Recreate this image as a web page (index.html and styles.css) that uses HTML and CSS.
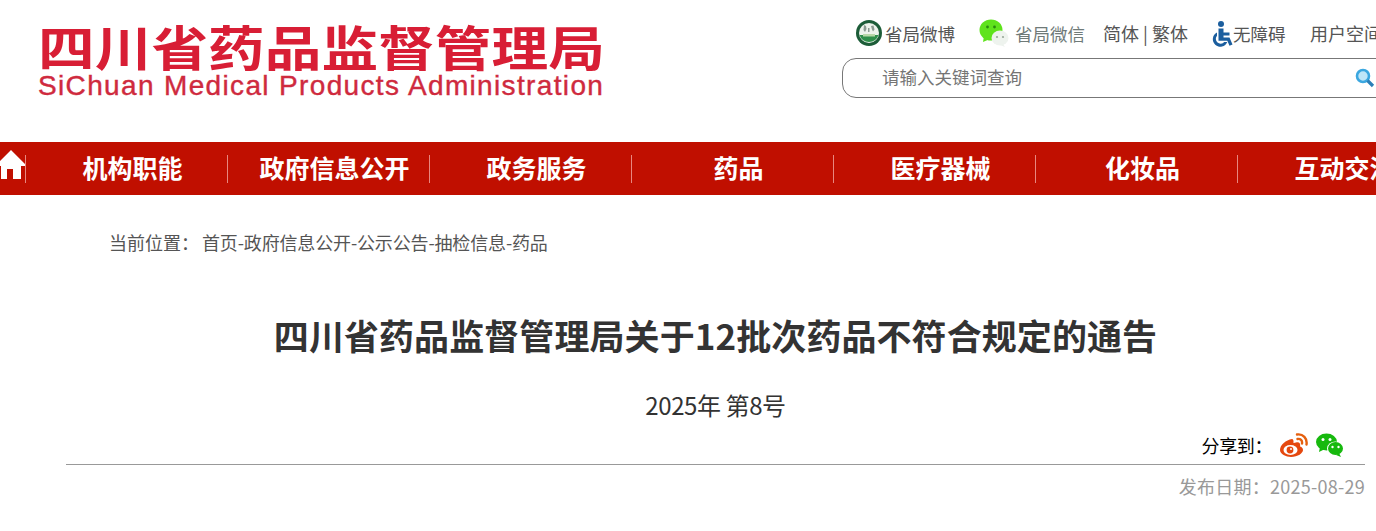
FILE: index.html
```html
<!DOCTYPE html>
<html lang="zh-CN">

<head>
    <meta charset="UTF-8">
    <title>四川省药品监督管理局关于12批次药品不符合规定的通告</title>
    <link rel="stylesheet" href="styles.css">
</head>

<body>

    <header class="header">
        <div class="logo">
            <div class="logo-cn">四川省药品监督管理局</div>
            <div class="logo-en">SiChuan Medical Products Administration</div>
        </div>

        <div class="tools">
            <div class="links">
                <a class="link link-weibo">
                    <svg class="icon-seal" viewBox="0 0 26 26">
                        <circle cx="13" cy="13" r="13" fill="#1c5c38" />
                        <circle cx="13" cy="13" r="10" fill="#eef3ec" />
                        <path d="M3.500 15h19a10 10 0 0 1-19 0z" fill="#2f8f4a" />
                        <path d="M7 14h12v2.500H7z" fill="#b9d8a8" />
                        <path d="M8 5l2 1 .5 3-1.500 3-1.500-2zM15 6l2.500-.5 1 4-1.500 2-1-2zM12 8h1.500v4H12z" fill="#8a9a90" />
                    </svg>
                    省局微博
                </a>
                <a class="link link-wechat">
                    <svg class="icon-chat" viewBox="0 0 30 28">
                        <ellipse cx="12" cy="11" rx="11.500" ry="10.500" fill="#5fe31c" />
                        <path d="M5 17l-1 6 7-3z" fill="#5fe31c" />
                        <circle cx="8.500" cy="8" r="1.400" fill="#2a8a10" />
                        <circle cx="15.500" cy="8" r="1.400" fill="#2a8a10" />
                        <ellipse cx="21" cy="19" rx="8.500" ry="7.500" fill="#eef3ee" />
                        <path d="M24 25l2 3-5-2z" fill="#eef3ee" />
                        <circle cx="18" cy="18" r="1.100" fill="#9aa89a" />
                        <circle cx="24" cy="18" r="1.100" fill="#9aa89a" />
                    </svg>
                    省局微信
                </a>
                <a class="link link-lang">简体 | 繁体</a>
                <a class="link link-access">
                    <svg class="icon-access" viewBox="0 0 20 26">
                        <circle cx="8.500" cy="3" r="3" fill="#1b5e9e" />
                        <path d="M6 7.500h5v4h6v3h-6v2h6l3 7-3 1.200-2.200-5H6z" fill="#1b5e9e" />
                        <path d="M4.500 11.500v3.300a4.500 4.500 0 1 0 7.200 6.200h3.100A7.500 7.500 0 1 1 4.500 11.500z" fill="#1b5e9e" />
                    </svg>
                    无障碍
                </a>
                <a class="link link-user">用户空间</a>
            </div>

            <div class="search">
                <span class="search-text">请输入关键词查询</span>
                <svg class="icon-search" viewBox="0 0 20 20">
                    <circle cx="8" cy="8" r="6" fill="#bfe6f8" stroke="#3ba7e0" stroke-width="2.600" />
                    <path d="M12.500 12.500l5.500 5.500" stroke="#2b7fb8" stroke-width="3.200" />
                </svg>
            </div>
        </div>
    </header>

    <nav class="nav">
        <a class="nav-home">
            <svg class="icon-home" viewBox="0 0 28 30">
                <path d="M14 1L28 15v2h-4v13h-8V20h-6v10H4V17H0v-2z" fill="#fff" />
            </svg>
        </a>
        <a class="nav-item">机构职能</a>
        <a class="nav-item">政府信息公开</a>
        <a class="nav-item">政务服务</a>
        <a class="nav-item">药品</a>
        <a class="nav-item">医疗器械</a>
        <a class="nav-item">化妆品</a>
        <a class="nav-item">互动交流</a>
    </nav>

    <main class="article">
        <div class="crumb">
            <span class="crumb-label">当前位置：</span>
            <span class="crumb-path">首页-政府信息公开-公示公告-抽检信息-药品</span>
        </div>

        <h1 class="title">四川省药品监督管理局关于12批次药品不符合规定的通告</h1>
        <p class="subtitle">2025年 第8号</p>

        <div class="share">
            <span class="share-label">分享到：</span>
            <svg class="icon-share" viewBox="0 0 28 24">
                <path d="M12 6C6 7 0 12 0 17c0 4 6 7 11 7 7 0 12-4 12-7 0-2-2-3.500-3-3.500 1-3-1-5-4-4-1 .3-2 .7-2.500.5.300-3-.5-4-1.500-4z" fill="#e5480f" />
                <ellipse cx="10.500" cy="17" rx="7" ry="5" fill="#fff" />
                <circle cx="10" cy="17" r="3.400" fill="#e5480f" />
                <circle cx="11" cy="16" r="1" fill="#fff" />
                <path d="M17 1.500c6-1 10.500 4 9.500 10M17.500 6c3-.5 5 1.500 4.500 4.500" fill="none" stroke="#e5600f" stroke-width="2.400" stroke-linecap="round" />
            </svg>
            <svg class="icon-share" viewBox="0 0 28 24">
                <ellipse cx="10.500" cy="9" rx="10.500" ry="8.500" fill="#17b90e" />
                <path d="M4 14l-1 5 6-3z" fill="#17b90e" />
                <circle cx="7" cy="6.500" r="1.500" fill="#fff" />
                <circle cx="14" cy="6.500" r="1.500" fill="#fff" />
                <ellipse cx="19.500" cy="15.500" rx="8.500" ry="7" fill="#fff" />
                <ellipse cx="19.500" cy="15.500" rx="7.500" ry="6.500" fill="#17b90e" />
                <path d="M23 20l2 4-5-2z" fill="#17b90e" />
                <circle cx="16.500" cy="14" r="1.200" fill="#fff" />
                <circle cx="22.500" cy="14" r="1.200" fill="#fff" />
            </svg>
        </div>

        <div class="date">发布日期：2025-08-29</div>
    </main>

</body>

</html>
```

FILE: styles.css
```css
* {
    margin: 0;
    padding: 0;
    box-sizing: border-box;
}

html,
body {
    overflow: hidden;
}

body {
    width: 1376px;
    height: 531px;
    background-color: #fff;
    color: #333;
    font-family: "Noto Sans CJK SC", "Liberation Sans", sans-serif;
}

.header {
    display: flex;
    height: 142px;
    width: 1500px;
}

.logo {
    width: 842px;
    padding: 21px 0 0 38px;
    color: #d81e35;
}

.logo-cn {
    font-size: 48px;
    font-weight: 700;
    line-height: 48px;
    white-space: nowrap;
    transform: scaleX(1.181);
    transform-origin: left center;
}

.logo-en {
    margin-top: 4px;
    font-family: "Liberation Sans", sans-serif;
    font-size: 28px;
    line-height: 26px;
    letter-spacing: 1.350px;
    white-space: nowrap;
    color: #cf2a3e;
    -webkit-text-stroke: 0.4px #cf2a3e;
}

.tools {
    width: 640px;
}

.links {
    display: flex;
    align-items: center;
    height: 58px;
    padding: 8px 0 0 14px;
    font-size: 17.500px;
    color: #555;
    white-space: nowrap;
}

.link {
    display: flex;
    align-items: center;
}

.link-weibo {
    width: 123px;
}

.link-wechat {
    width: 124px;
    color: #6f7a78;
}

.link-lang {
    width: 107px;
    font-size: 18px;
}

.link-access {
    width: 100px;
}

.icon-seal {
    width: 26px;
    height: 26px;
    margin-right: 3px;
}

.icon-chat {
    width: 30px;
    height: 28px;
    margin-right: 6px;
}

.icon-access {
    width: 21px;
    height: 26px;
    margin: 1px 0 0 2px;
}

.link-user {
    font-size: 18px;
}

.search {
    display: flex;
    align-items: center;
    justify-content: space-between;
    width: 620px;
    height: 40px;
    padding-left: 39px;
    padding-right: 86px;
    border: 1px solid #777;
    border-radius: 14px;
    font-size: 17.500px;
    color: #757575;
}

.search-text {
    margin-top: -3px;
}

.icon-search {
    width: 20px;
    height: 20px;
}

.nav {
    display: flex;
    height: 53px;
    align-items: center;
    background-color: #c00f00;
    white-space: nowrap;
}

.nav-home {
    flex: 0 0 26px;
    height: 28px;
    border-right: 1px solid #e8877f;
}

.icon-home {
    display: block;
    width: 28px;
    height: 30px;
    margin: -6px 0 0 -3px;
}

.nav-item {
    flex: 0 0 202px;
    height: 28px;
    padding-left: 12px;
    border-right: 1px solid #e8877f;
    font-size: 25px;
    font-weight: 700;
    line-height: 24px;
    text-align: center;
    color: #fff;
}

.article {
    width: 1299px;
    margin-left: 66px;
}

.crumb {
    display: flex;
    gap: 12px;
    padding: 34px 0 0 43px;
    font-size: 18px;
    line-height: 26px;
    color: #555;
}

.crumb-label {
    width: 81px;
    white-space: nowrap;
}

.crumb-path {
    letter-spacing: -0.150px;
}

.title {
    margin-top: 57px;
    font-size: 35px;
    line-height: 46px;
    letter-spacing: 0.080px;
    text-align: center;
    color: #333;
}

.subtitle {
    margin-top: 29px;
    font-size: 24px;
    line-height: 36px;
    letter-spacing: -0.400px;
    text-align: center;
}

.share {
    display: flex;
    align-items: center;
    justify-content: flex-end;
    gap: 8px;
    height: 42px;
    padding: 2px 21px 0 0;
    border-bottom: 1px solid #999;
    font-size: 18px;
    color: #000;
}

.share-label {
    letter-spacing: -0.400px;
}

.icon-share {
    width: 28px;
    height: 24px;
}

.date {
    margin-top: 8px;
    font-size: 18px;
    line-height: 26px;
    letter-spacing: 0.250px;
    text-align: right;
    color: #999;
}
```
